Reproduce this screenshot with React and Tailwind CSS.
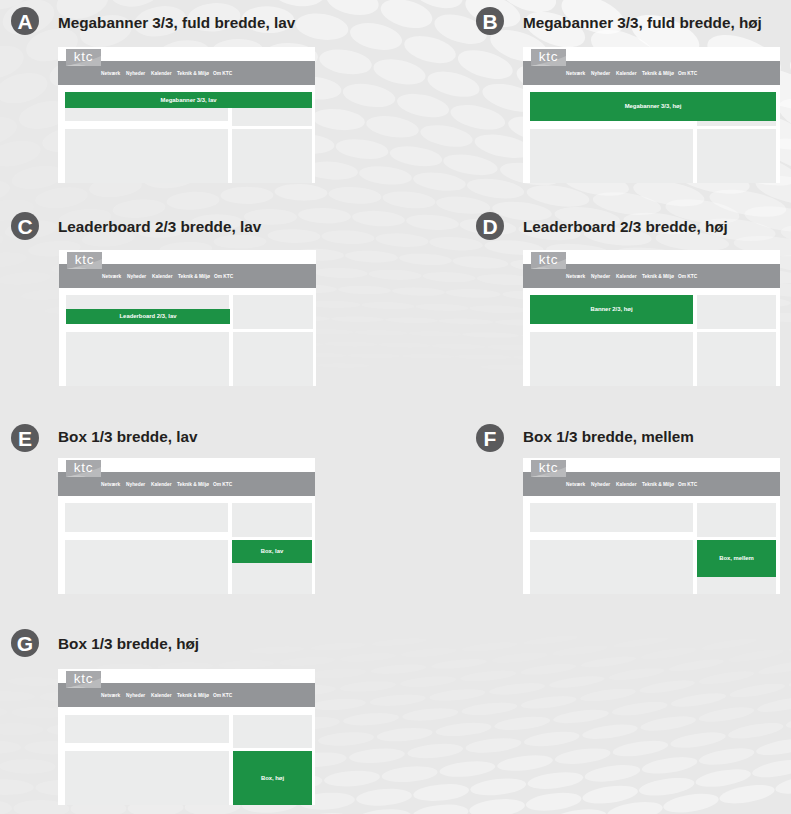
const FONT = "font-['Liberation_Sans',Arial,sans-serif]";

const lnCosh = (u) => Math.log(Math.cosh(u));

function topEllipses() {
  const rows = [-48, -18, 12, 42, 72, 101, 128, 154, 177, 199, 220, 240, 258, 275, 291, 306, 320, 333, 345, 356, 366, 375];
  const slopes = [0.3, 0.28, 0.26, 0.24, 0.21, 0.19, 0.16, 0.14, 0.11, 0.09, 0.07, 0.06, 0.05, 0.04, 0.03, 0.03, 0.02, 0.02, 0.02, 0.01, 0.01, 0.01];
  const out = [];
  rows.forEach((y0, r) => {
    const k = r - 3;
    const s = slopes[r];
    for (let i = -14; i < 14; i++) {
      const x = 376 - 30.5 * k + 54 * i;
      const over = Math.max(0, x - 450);
      const under = Math.max(0, 300 - x) / 300;
      const X = x + (over * over) / 900;
      const f = 1 + over / 500;
      const u = (x - 250) / 150;
      const sl = (s / 0.76) * Math.tanh(u);
      const Y0 = y0 + (s / 0.76) * 150 * (lnCosh(u) - lnCosh(1));
      const Y = Y0 + (Y0 - 100) * 0.25 * under;
      if (X < -60 || X > 860 || Y < -40 || Y > 400) continue;
      const ry = Math.max(2.5, 13.5 - Y * 0.027 - (Y > 220 ? (Y - 220) * 0.02 : 0)) * f * (1 + 0.3 * under);
      const rx = 26.5 * f;
      const fadeY = Math.max(0, 1 - Y / 400);
      const side = X < 300 ? 0.35 + (0.65 * Math.max(0, X)) / 300 : 1 + Math.min(0.45, over / 400);
      out.push({ x: X, y: Y, rx, ry, a: (Math.atan(sl) * 180) / Math.PI, o: 0.48 * fadeY * side });
    }
  });
  return out;
}

function bottomEllipses() {
  const rows = [
    [837, 355], [817, 384], [796, 384], [775, 352], [754, 377], [735, 346], [717, 371], [700, 338],
    [684, 368], [669, 338], [655, 368], [642, 338], [630, 368], [619, 338], [609, 368], [600, 338],
  ];
  const out = [];
  rows.forEach(([y0, off]) => {
    const dx = 56 + (837 - y0) * 0.027;
    for (let i = -8; i < 10; i++) {
      const x = off + dx * i;
      if (x < -50 || x > 850) continue;
      const d = x - 80;
      const a0 = 0.000125;
      const Y = y0 - a0 * (d * d - 320 * 320);
      const sl = -2 * a0 * d;
      const ry = Math.max(1.6, 2 + (Y - 590) * 0.03);
      const side = x < 300 ? 0.3 + (0.4 * Math.max(0, x)) / 300 : x < 500 ? 0.7 + (0.3 * (x - 300)) / 200 : 1;
      const t = Math.max(0, Math.min(1, (Y - 600) / 190));
      out.push({ x, y: Y, rx: 28, ry, a: (Math.atan(sl) * 180) / Math.PI, o: 0.42 * Math.pow(t, 1.4) * side });
    }
  });
  return out;
}

function Backdrop() {
  const items = [...topEllipses(), ...bottomEllipses()];
  return (
    <svg className="absolute inset-0 w-full h-full" viewBox="0 0 791 814" aria-hidden="true">
      {items.map((e, i) => (
        <ellipse
          key={i}
          cx={e.x}
          cy={e.y}
          rx={e.rx}
          ry={e.ry}
          fill="#ffffff"
          opacity={e.o}
          transform={`rotate(${e.a} ${e.x} ${e.y})`}
        />
      ))}
    </svg>
  );
}

function Logo() {
  return (
    <div className="absolute left-[8px] top-[2px] w-[35px] h-[17px] bg-[#a7a8ab] flex items-center justify-center overflow-hidden">
      <svg className="absolute inset-0 w-full h-full" viewBox="0 0 35 17" aria-hidden="true">
        <path d="M0 17 C12 14 24 12 35 7 V17 Z" fill="#b9babc" />
        <path d="M0 17 C8 15 14 15 20 17 Z" fill="#c9cacb" />
      </svg>
      <span className="relative text-white text-[13.5px] leading-none tracking-[0.7px] -mt-[1px]">ktc</span>
    </div>
  );
}

function Nav() {
  return (
    <div className="h-[24px] bg-[#939598] flex items-center pl-[43px] gap-[7px] text-[4.8px] font-bold text-white whitespace-nowrap pt-[1px]">
      <span className="w-[18px]">Netværk</span>
      <span className="w-[18px]">Nyheder</span>
      <span className="w-[19px]">Kalender</span>
      <span className="w-[29px]">Teknik &amp; Miljø</span>
      <span className="w-[18px]">Om KTC</span>
    </div>
  );
}

function Green({ className, children }) {
  return (
    <div className={`bg-[#1c9245] flex items-center justify-center text-white font-bold text-[5.9px] whitespace-nowrap ${className}`}>
      {children}
    </div>
  );
}

function Mock({ cols = "grid-cols-[163px_80px]", pt = "pt-[7px]", leftH = "h-[29px]", rightH = "h-[34px]", ml = "ml-[47px]", mt, row1Left, row2Right, overlay }) {
  return (
    <div className={`relative w-[257px] h-[136px] bg-white ${ml} ${mt}`}>
      <Logo />
      <div className="h-[14px]" />
      <Nav />
      <div className={`relative pl-[7px] ${pt}`}>
        <div className={`grid ${cols} gap-x-[4px] gap-y-[3px]`}>
          {row1Left || <div className={`${leftH} bg-[#ebecec]`} />}
          <div className={`${rightH} bg-[#ebecec]`} />
          <div className="h-[54px] bg-[#ebecec]" />
          {row2Right || <div className="h-[54px] bg-[#ebecec]" />}
        </div>
        {overlay}
      </div>
    </div>
  );
}

function Section({ letter, title, titleShift = "pt-[2px]", children }) {
  return (
    <section className="pt-[7px] pl-[11px]">
      <div className="flex items-center gap-[19px] h-[28px]">
        <div className="w-[28px] h-[28px] rounded-full bg-[#5a5a5c] flex items-center justify-center text-white font-bold text-[21px] leading-none">
          {letter}
        </div>
        <h2 className={`text-[15.3px] leading-none font-bold text-[#231f20] whitespace-nowrap ${titleShift}`}>{title}</h2>
      </div>
      {children}
    </section>
  );
}

export default function App() {
  return (
    <div className={`relative w-[791px] h-[814px] overflow-hidden bg-[#e8e8e8] ${FONT}`}>
      <Backdrop />
      <div className="relative grid grid-cols-[465px_326px] grid-rows-[205px_212px_205px_192px] h-full">
        <Section letter="A" title="Megabanner 3/3, fuld bredde, lav" titleShift="pt-[3px]">
          <Mock
            mt="mt-[12px]"
            overlay={<Green className="absolute left-[7px] top-[7px] w-[247px] h-[16px]">Megabanner 3/3, lav</Green>}
          />
        </Section>
        <Section letter="B" title="Megabanner 3/3, fuld bredde, høj" titleShift="pt-[3px]">
          <Mock
            mt="mt-[12px]"
            cols="grid-cols-[163px_79px]"
            overlay={<Green className="absolute left-[7px] top-[7px] w-[246px] h-[29px]">Megabanner 3/3, høj</Green>}
          />
        </Section>
        <Section letter="C" title="Leaderboard 2/3 bredde, lav">
          <Mock
            mt="mt-[10px]"
            ml="ml-[48px]"
            overlay={<Green className="absolute left-[7px] top-[21px] w-[164px] h-[15px]">Leaderboard 2/3, lav</Green>}
          />
        </Section>
        <Section letter="D" title="Leaderboard 2/3 bredde, høj">
          <Mock
            mt="mt-[10px]"
            cols="grid-cols-[163px_79px]"
            row1Left={<Green className="h-[29px]">Banner 2/3, høj</Green>}
          />
        </Section>
        <Section letter="E" title="Box 1/3 bredde, lav" titleShift="pb-[3px]">
          <Mock
            mt="mt-[6px]"
            row2Right={
              <div className="h-[54px] bg-[#ebecec]">
                <Green className="h-[23px]">Box, lav</Green>
              </div>
            }
          />
        </Section>
        <Section letter="F" title="Box 1/3 bredde, mellem" titleShift="pb-[3px]">
          <Mock
            mt="mt-[6px]"
            cols="grid-cols-[163px_79px]"
            row2Right={
              <div className="h-[54px] bg-[#ebecec]">
                <Green className="h-[37px]">Box, mellem</Green>
              </div>
            }
          />
        </Section>
        <Section letter="G" title="Box 1/3 bredde, høj">
          <Mock
            mt="mt-[12px]"
            cols="grid-cols-[164px_79px]"
            pt="pt-[8px]"
            leftH="h-[28px]"
            rightH="h-[33px]"
            row2Right={<Green className="h-[54px]">Box, høj</Green>}
          />
        </Section>
      </div>
    </div>
  );
}
